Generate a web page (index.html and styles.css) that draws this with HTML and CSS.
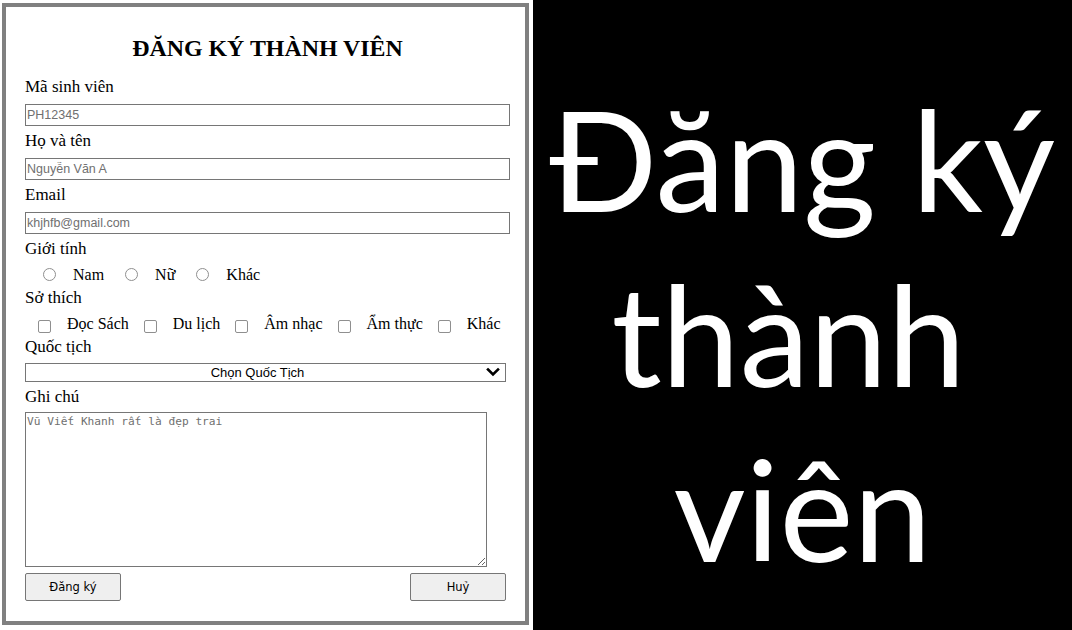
FILE: index.html
```html
<!DOCTYPE html>
<html lang="vi">
<head>
<meta charset="utf-8">
<title>Đăng ký thành viên</title>
<link rel="stylesheet" href="styles.css">
</head>
<body>
<div class="page">
  <div class="left">
    <form class="card">
      <h1 class="title">ĐĂNG KÝ THÀNH VIÊN</h1>

      <label class="lbl" for="msv">Mã sinh viên</label>
      <input class="txt" id="msv" type="text" placeholder="PH12345">

      <label class="lbl" for="hoten">Họ và tên</label>
      <input class="txt" id="hoten" type="text" placeholder="Nguyễn Văn A">

      <label class="lbl" for="email">Email</label>
      <input class="txt" id="email" type="email" placeholder="khjhfb@gmail.com">

      <div class="lbl">Giới tính</div>
      <div class="choices radios">
        <label class="opt"><input class="radio" type="radio" name="gt"><span>Nam</span></label>
        <label class="opt"><input class="radio" type="radio" name="gt"><span>Nữ</span></label>
        <label class="opt"><input class="radio" type="radio" name="gt"><span>Khác</span></label>
      </div>

      <div class="lbl">Sở thích</div>
      <div class="choices checks">
        <label class="opt"><input class="check" type="checkbox"><span>Đọc Sách</span></label>
        <label class="opt"><input class="check" type="checkbox"><span>Du lịch</span></label>
        <label class="opt"><input class="check" type="checkbox"><span>Âm nhạc</span></label>
        <label class="opt"><input class="check" type="checkbox"><span>Ẩm thực</span></label>
        <label class="opt"><input class="check" type="checkbox"><span>Khác</span></label>
      </div>

      <label class="lbl lbl-select" for="qt">Quốc tịch</label>
      <div class="select-wrap">
        <select class="sel" id="qt">
          <option>Chọn Quốc Tịch</option>
        </select>
        <svg class="chev" width="14" height="10" viewBox="0 0 14 10" aria-hidden="true">
          <polyline points="2,2.5 7,7.5 12,2.5" fill="none" stroke="#000" stroke-width="2.6" stroke-linecap="square" stroke-linejoin="miter"/>
        </svg>
      </div>

      <label class="lbl lbl-note" for="note">Ghi chú</label>
      <textarea class="note" id="note" placeholder="Vũ Viết Khanh rất là đẹp trai"></textarea>

      <div class="actions">
        <button class="btn" type="submit">Đăng ký</button>
        <button class="btn" type="reset">Huỷ</button>
      </div>
    </form>
  </div>

  <div class="banner">
    <span class="line">Đăng ký</span>
    <span class="line line-mid">thành</span>
    <span class="line">viên</span>
  </div>
</div>
</body>
</html>
```

FILE: styles.css
```css
* {
  box-sizing: border-box;
}

html, body {
  margin: 0;
  padding: 0;
}

body {
  background: #fff;
  font-family: "Liberation Serif", "Times New Roman", serif;
  color: #000;
}

.page {
  display: flex;
  width: 1072px;
  height: 630px;
}

.left {
  width: 533px;
  flex: none;
  padding: 3px 4px 5px 2px;
}

.card {
  height: 622px;
  border: 4px solid #808080;
  padding: 27px 15px 0 19px;
  display: flex;
  flex-direction: column;
  align-items: flex-start;
}

.title {
  width: 100%;
  margin: 0 0 14px;
  text-align: center;
  font-size: 23.9px;
  line-height: 28px;
  font-weight: bold;
}

.lbl {
  display: block;
  font-size: 17px;
  line-height: 21px;
  margin: 0;
}

.txt {
  display: block;
  width: 485px;
  height: 22px;
  margin: 7px 0 4px;
  padding: 0 1px;
  border: 1px solid #767676;
  border-radius: 0;
  font-family: "Liberation Sans", Arial, sans-serif;
  font-size: 12.5px;
  color: #000;
  background: #fff;
  outline: none;
}

.txt::placeholder {
  color: #707070;
}

.choices {
  display: flex;
  align-items: flex-start;
  height: 26px;
  padding-top: 5px;
  margin-bottom: 2px;
  font-size: 16px;
  line-height: 21px;
  white-space: nowrap;
}

.radios {
  padding-left: 18px;
  gap: 21px;
}

.checks {
  padding-left: 13px;
  gap: 15px;
}

.opt {
  display: flex;
  flex: none;
  align-items: flex-start;
}

.radios .opt {
  gap: 17px;
}

.checks .opt {
  gap: 16px;
}

.radio,
.check {
  appearance: none;
  -webkit-appearance: none;
  width: 13px;
  height: 13px;
  margin: 0;
  border: 1px solid #8f8f8f;
  background: #fff;
  flex: none;
}

.radio {
  border-radius: 50%;
  margin-top: 4px;
}

.check {
  border-radius: 2px;
  margin-top: 7px;
}

.lbl-select {
  margin-bottom: 6px;
}

.select-wrap {
  position: relative;
  width: 481px;
  height: 19px;
}

.sel {
  appearance: none;
  -webkit-appearance: none;
  display: block;
  width: 100%;
  height: 19px;
  margin: 0;
  padding: 0 20px 0 4px;
  border: 1px solid #767676;
  border-radius: 0;
  background: #fff;
  font-family: "Liberation Sans", Arial, sans-serif;
  font-size: 13px;
  line-height: 17px;
  color: #000;
  text-align: center;
  text-align-last: center;
}

.chev {
  position: absolute;
  right: 6px;
  top: 4px;
  pointer-events: none;
}

.lbl-note {
  margin-top: 4px;
  margin-bottom: 5px;
}

.note {
  display: block;
  width: 462px;
  height: 155px;
  margin: 0;
  padding: 2px 1px;
  border: 1px solid #767676;
  border-radius: 0;
  font-family: "DejaVu Sans Mono", "Liberation Mono", monospace;
  font-size: 11.2px;
  line-height: 14px;
  resize: both;
  outline: none;
}

.note::placeholder {
  color: #707070;
}

.actions {
  display: flex;
  justify-content: space-between;
  width: 481px;
  margin-top: 6px;
}

.btn {
  width: 96px;
  height: 28px;
  margin: 0;
  padding: 0;
  border: 1px solid #767676;
  border-radius: 2px;
  background: #efefef;
  font-family: "DejaVu Sans", Verdana, sans-serif;
  font-size: 11.5px;
  color: #000;
}

.banner {
  flex: 1;
  background: #000;
  color: #fff;
  display: flex;
  flex-direction: column;
  align-items: center;
  padding-top: 71px;
  font-family: Lato, "Open Sans", sans-serif;
  font-size: 140px;
  line-height: 175px;
  white-space: nowrap;
}

.line {
  display: block;
}

.line-mid {
  margin-right: 28px;
}
```
